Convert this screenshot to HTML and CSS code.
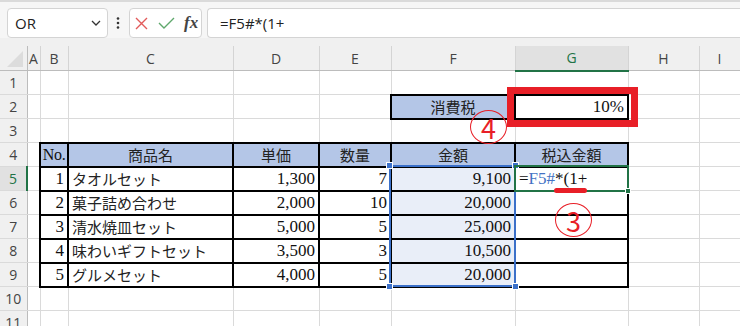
FILE: index.html
```html
<!DOCTYPE html>
<html lang="ja">
<head>
<meta charset="UTF-8">
<meta name="viewport" content="width=device-width, initial-scale=1.0">
<title>税込金額の計算</title>
<link rel="stylesheet" href="styles.css">
</head>
<body>
  <div class="toolbar">
    <div class="name-box">
      <span>OR</span>
      <svg class="chevron" width="10" height="6" viewBox="0 0 10 6"><path d="M1 1l4 4 4-4" fill="none" stroke="#333" stroke-width="1.3"/></svg>
    </div>
    <svg class="more" width="4" height="12" viewBox="0 0 4 12"><circle cx="2" cy="1.5" r="1.3"/><circle cx="2" cy="6" r="1.3"/><circle cx="2" cy="10.5" r="1.3"/></svg>
    <div class="fx-buttons">
      <svg class="cancel" width="13" height="13" viewBox="0 0 13 13"><path d="M1 1l11 11M12 1L1 12" stroke="#e25b5b" stroke-width="1.4" fill="none"/></svg>
      <svg class="enter" width="17" height="12" viewBox="0 0 17 12"><path d="M1 6l5 5L16 1" stroke="#5fa86c" stroke-width="1.4" fill="none"/></svg>
      <span class="fx">fx</span>
    </div>
    <div class="formula">=F5#*(1+</div>
  </div>

  <div class="sheet">
    <table class="grid">
      <colgroup>
        <col style="width:27px"><col style="width:13px"><col style="width:28px"><col style="width:165px"><col style="width:86px">
        <col style="width:72px"><col style="width:124px"><col style="width:113px"><col style="width:71px"><col style="width:41px">
      </colgroup>
      <thead>
        <tr>
          <th class="corner"><svg width="27" height="24" viewBox="0 0 27 24"><polygon points="7,21 23,21 23,5" fill="#dcdcdc"/></svg></th>
          <th class="col">A</th><th class="col">B</th><th class="col">C</th><th class="col">D</th><th class="col">E</th>
          <th class="col">F</th><th class="col on">G</th><th class="col">H</th><th class="col">I</th>
        </tr>
      </thead>
      <tbody>
        <tr><th class="rh">1</th><td></td><td></td><td></td><td></td><td></td><td></td><td></td><td></td><td></td></tr>
        <tr><th class="rh">2</th><td></td><td></td><td></td><td></td><td></td><td class="t hd jp">消費税</td><td class="t r">10%</td><td></td><td></td></tr>
        <tr><th class="rh">3</th><td></td><td></td><td></td><td></td><td></td><td></td><td></td><td></td><td></td></tr>
        <tr>
          <th class="rh">4</th><td></td>
          <td class="t hd no">No.</td><td class="t hd jp">商品名</td><td class="t hd jp">単価</td><td class="t hd jp">数量</td>
          <td class="t hd jp">金額</td><td class="t hd jp">税込金額</td><td></td><td></td>
        </tr>
        <tr>
          <th class="rh on">5</th><td></td>
          <td class="t r">1</td><td class="t jp">タオルセット</td><td class="t r">1,300</td><td class="t r">7</td>
          <td class="t r sel">9,100</td>
          <td class="t edit">=<span class="ref">F5#</span>*(1+</td><td></td><td></td>
        </tr>
        <tr>
          <th class="rh">6</th><td></td>
          <td class="t r">2</td><td class="t jp">菓子詰め合わせ</td><td class="t r">2,000</td><td class="t r">10</td>
          <td class="t r sel">20,000</td><td class="t"></td><td></td><td></td>
        </tr>
        <tr>
          <th class="rh">7</th><td></td>
          <td class="t r">3</td><td class="t jp">清水焼皿セット</td><td class="t r">5,000</td><td class="t r">5</td>
          <td class="t r sel">25,000</td><td class="t"></td><td></td><td></td>
        </tr>
        <tr>
          <th class="rh">8</th><td></td>
          <td class="t r">4</td><td class="t jp">味わいギフトセット</td><td class="t r">3,500</td><td class="t r">3</td>
          <td class="t r sel">10,500</td><td class="t"></td><td></td><td></td>
        </tr>
        <tr>
          <th class="rh">9</th><td></td>
          <td class="t r">5</td><td class="t jp">グルメセット</td><td class="t r">4,000</td><td class="t r">5</td>
          <td class="t r sel">20,000</td><td class="t"></td><td></td><td></td>
        </tr>
        <tr><th class="rh">10</th><td></td><td></td><td></td><td></td><td></td><td></td><td></td><td></td><td></td></tr>
        <tr><th class="rh">11</th><td></td><td></td><td></td><td></td><td></td><td></td><td></td><td></td><td></td></tr>
      </tbody>
    </table>

    <!-- 選択範囲とアクティブセル -->
    <div class="range">
      <i class="handle tl"></i><i class="handle tr"></i><i class="handle bl"></i><i class="handle br"></i>
    </div>
    <div class="active"><i class="handle br"></i></div>

    <!-- 注釈 -->
    <div class="tax-frame"></div>
    <div class="mark mark-4">4</div>
    <div class="underline"></div>
    <div class="mark mark-3">3</div>
  </div>
</body>
</html>
```

FILE: styles.css
```css
body {
  margin: 0;
  width: 740px;
  height: 326px;
  overflow: hidden;
  background: #fff;
  font-family: "Open Sans", "Liberation Sans", sans-serif;
}

.toolbar {
  height: 38px;
  box-sizing: border-box;
  border-top: 2px solid #dadada;
  background: #f6f6f6;
  display: flex;
  align-items: flex-end;
  padding-left: 7px;
}

.name-box {
  width: 101px;
  height: 30px;
  box-sizing: border-box;
  border: 1px solid #d4d4d4;
  border-radius: 4px;
  background: #fff;
  display: flex;
  align-items: center;
  justify-content: space-between;
  padding: 0 6px 0 7px;
  font-size: 15px;
  color: #222;
}

.more {
  fill: #333;
  margin: 0 9px 9px 8px;
}

.fx-buttons {
  width: 73px;
  height: 30px;
  box-sizing: border-box;
  border: 1px solid #d4d4d4;
  border-radius: 4px;
  background: #fff;
  display: flex;
  align-items: center;
  padding-left: 5px;
}

.fx-buttons .enter {
  margin-left: 10px;
}

.fx {
  margin-left: 9px;
  font-family: "Liberation Serif", serif;
  font-style: italic;
  font-weight: bold;
  font-size: 17px;
  color: #444;
}

.formula {
  flex: 1;
  margin-left: 5px;
  height: 30px;
  box-sizing: border-box;
  border: 1px solid #d4d4d4;
  border-right: none;
  border-radius: 4px 0 0 4px;
  background: #fff;
  padding-left: 12px;
  font-size: 15px;
  line-height: 28px;
  color: #222;
}

.sheet {
  position: relative;
  background: #f0f0f0;
  padding-top: 8px;
}

.grid {
  border-collapse: collapse;
  table-layout: fixed;
  width: 740px;
}

.grid tr {
  height: 24px;
}

.grid th {
  padding: 0;
  font-weight: normal;
  font-size: 14px;
  color: #444;
  background: #f0f0f0;
}

.corner {
  border-right: 1px solid #bcbcbc;
  border-bottom: 1px solid #bcbcbc;
  line-height: 0;
}

.col {
  border-right: 1px solid #d4d4d4;
  border-bottom: 1px solid #bcbcbc;
}

.col.on {
  background: #e1e1e1;
  color: #217346;
  border-bottom: 2px solid #217346;
}

.rh {
  border-right: 1px solid #bcbcbc;
  border-bottom: 1px solid #dadada;
}

.rh.on {
  background: #e1e1e1;
  color: #217346;
  border-right: 2px solid #217346;
}

.grid td {
  background: #fff;
  border: 1px solid #dadada;
  padding: 0 3px;
  line-height: 20px;
  font-family: "Liberation Serif", serif;
  font-size: 17px;
  color: #111;
  white-space: nowrap;
  overflow: hidden;
}

.grid td.t {
  border: 2px solid #000;
}

.grid td.hd {
  background: #b4c6e7;
  text-align: center;
}

.grid td.no {
  padding: 0;
  font-size: 16px;
  letter-spacing: -0.3px;
}

.grid td.r {
  text-align: right;
}

.grid td.jp {
  font-family: "Noto Sans CJK JP", sans-serif;
  font-size: 15px;
  color: #222;
}

.grid td.sel {
  background: #e9eef8;
}

.edit .ref {
  color: #4472c4;
}

.range,
.active,
.tax-frame,
.underline,
.mark {
  position: absolute;
  box-sizing: border-box;
}

.range {
  left: 389px;
  top: 127px;
  width: 127px;
  height: 122px;
  border: 2px solid #3b70c9;
}

.active {
  left: 514px;
  top: 127px;
  width: 115px;
  height: 27px;
  border: 2px solid #217346;
}

.handle {
  position: absolute;
  width: 7px;
  height: 7px;
  box-sizing: border-box;
  background: #3b70c9;
  border: 1px solid #fff;
}

.handle.tl { left: -5px; top: -5px; }
.handle.tr { right: -5px; top: -5px; }
.handle.bl { left: -5px; bottom: -5px; }
.handle.br { right: -5px; bottom: -5px; }

.active .handle {
  width: 6px;
  height: 6px;
  background: #217346;
  right: -4px;
  bottom: -4px;
}

.tax-frame {
  left: 507px;
  top: 49px;
  width: 131px;
  height: 40px;
  border: 7px solid #e81f27;
}

.underline {
  left: 554px;
  top: 150px;
  width: 33px;
  height: 5px;
  border-radius: 3px;
  background: #e81f27;
}

.mark {
  width: 37px;
  height: 34px;
  border: 1.5px solid #e81f27;
  border-radius: 50%;
  display: flex;
  align-items: center;
  justify-content: center;
  font-family: "Noto Sans CJK JP", sans-serif;
  font-size: 27px;
  line-height: 1;
  color: #e81f27;
}

.mark-4 {
  left: 470px;
  top: 72px;
}

.mark-3 {
  left: 555px;
  top: 165px;
}
```
